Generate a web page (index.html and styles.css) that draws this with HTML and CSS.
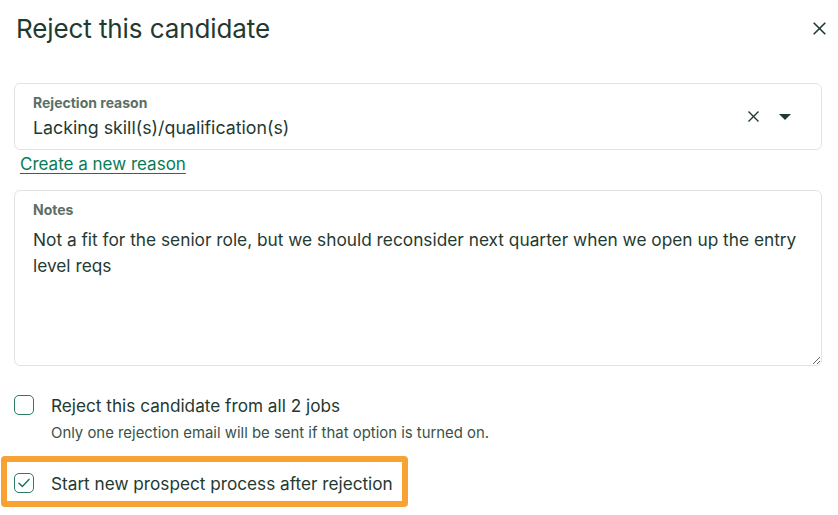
FILE: index.html
```html
<!DOCTYPE html>
<html lang="en">
<head>
    <meta charset="UTF-8">
    <title>Reject this candidate</title>
    <link rel="stylesheet" href="styles.css">
</head>
<body>
    <div class="modal">
        <div class="modal-header">
            <h2>Reject this candidate</h2>
            <button class="close-btn" aria-label="Close">
                <svg width="13" height="13" viewBox="0 0 13 13"><path d="M0.7 0.7L12.3 12.3M12.3 0.7L0.7 12.3" stroke="#1f3a31" stroke-width="1.6" fill="none"/></svg>
            </button>
        </div>

        <div class="select-box">
            <div class="select-text">
                <div class="field-label">Rejection reason</div>
                <div class="select-value">Lacking skill(s)/qualification(s)</div>
            </div>
            <span class="select-clear">
                <svg width="11" height="11" viewBox="0 0 11 11"><path d="M0.5 0.5L10.5 10.5M10.5 0.5L0.5 10.5" stroke="#1f3a31" stroke-width="1.4" fill="none"/></svg>
            </span>
            <span class="select-arrow">
                <svg width="12" height="6" viewBox="0 0 12 6"><path d="M0 0H12L6 6Z" fill="#1f3a31"/></svg>
            </span>
        </div>
        <a class="new-reason" href="#">Create a new reason</a>

        <div class="notes">
            <div class="field-label">Notes</div>
            <div class="notes-text">Not a fit for the senior role, but we should reconsider next quarter when we open up the entry level reqs</div>
        </div>

        <div class="check-row">
            <span class="checkbox"></span>
            <div>
                <div class="check-label">Reject this candidate from all 2 jobs</div>
                <div class="check-help">Only one rejection email will be sent if that option is turned on.</div>
            </div>
        </div>

        <div class="highlight">
            <div class="check-row">
                <span class="checkbox checked">
                    <svg width="12" height="10" viewBox="0 0 12 10"><path d="M1 5.2L4.3 8.4L11 1.4" stroke="#1f7a5e" stroke-width="1.5" fill="none" stroke-linecap="round" stroke-linejoin="round"/></svg>
                </span>
                <div class="check-label">Start new prospect process after rejection</div>
            </div>
        </div>
    </div>
</body>
</html>
```

FILE: styles.css
```css
body {
    margin: 0;
    background: #fff;
    font-family: Inter, "Noto Sans", sans-serif;
    color: #1f3a31;
}

.modal {
    width: 838px;
    padding: 0 16px 0 14px;
    box-sizing: border-box;
}

.modal-header {
    display: flex;
    justify-content: space-between;
    align-items: center;
    padding: 6px 0 0 2px;
    height: 45px;
    margin-bottom: 32px;
}
.modal-header h2 {
    margin: 0;
    font-size: 26px;
    font-weight: 400;
    letter-spacing: -0.1px;
}
.close-btn {
    border: none;
    background: none;
    padding: 0;
    margin-right: -4px;
    display: flex;
}

.field-label {
    font-size: 14px;
    font-weight: 700;
    color: #5b6f67;
    line-height: 18px;
}

.select-box {
    display: flex;
    align-items: center;
    border: 1px solid #e2e4e3;
    border-radius: 6px;
    height: 67px;
    box-sizing: border-box;
    padding: 0 30px 0 18px;
}
.select-text {
    flex: 1;
    padding-top: 3px;
}
.select-value {
    margin-top: 2px;
    font-size: 17.8px;
    line-height: 28px;
}
.select-clear {
    display: flex;
    margin-right: 20px;
}
.select-arrow {
    display: flex;
}

.new-reason {
    display: inline-block;
    margin: 2px 0 0 6px;
    font-size: 17px;
    line-height: 24px;
    color: #077a59;
    text-underline-offset: 3px;
}

.notes {
    margin-top: 14px;
    border: 1px solid #e2e4e3;
    border-radius: 6px;
    height: 176px;
    box-sizing: border-box;
    padding: 10px 18px;
    resize: vertical;
    overflow: auto;
}
.notes-text {
    margin-top: 8px;
    font-size: 17.3px;
    line-height: 26px;
}

.check-row {
    display: flex;
    align-items: flex-start;
    gap: 17px;
}
.modal > .check-row {
    margin-top: 29px;
}
.checkbox {
    width: 20px;
    height: 20px;
    box-sizing: border-box;
    border: 1.5px solid #2b7b62;
    border-radius: 5px;
    flex-shrink: 0;
    display: flex;
    align-items: center;
    justify-content: center;
}
.check-label {
    font-size: 17.2px;
    line-height: 21px;
}
.check-help {
    margin-top: 7px;
    font-size: 14.9px;
    line-height: 20px;
    color: #3b5249;
}

.highlight {
    margin: 13px 0 0 -13px;
    width: 407px;
    height: 51px;
    box-sizing: border-box;
    border: 6px solid #f7a233;
    border-radius: 4px;
    padding: 11px 7px 0;
}
```
